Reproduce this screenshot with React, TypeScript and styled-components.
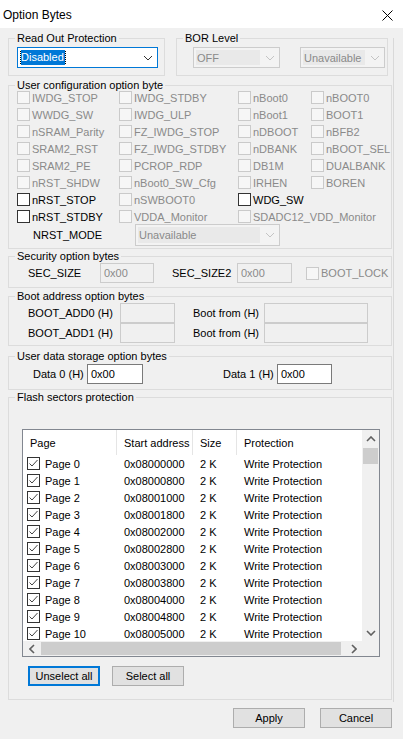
import React from 'react'
import styled, { createGlobalStyle } from 'styled-components'

const GlobalStyle = createGlobalStyle`
    * { box-sizing: border-box; }
    html, body { margin: 0; padding: 0; background: #f0f0f0; }
    body {
        font-family: "Liberation Sans", Arial, sans-serif;
        font-size: 11px;
        color: #000;
    }
`

const Window = styled.div`
    width: 403px;
    height: 739px;
    background: #f0f0f0;
    overflow: hidden;
`

const TitleBar = styled.div`
    height: 28px;
    background: #fff;
    display: flex;
    align-items: center;
    justify-content: space-between;
    padding: 2px 10px 0 3px;
    font-size: 12px;
`

const Panel = styled.div`
    width: 394px;
    padding: 0 1px 2px 8px;
    border-right: 1px solid #d9d9d9;
`

const TopRow = styled.div`
    display: flex;
    gap: 11px;
    margin-top: 10px;
`

const Group = styled.section<{ $width?: number; $gap?: number; $pb?: number; $pr?: number }>`
    width: ${(p) => (p.$width ? `${p.$width}px` : '100%')};
    margin-top: ${(p) => p.$gap ?? 0}px;
    padding: 0 ${(p) => p.$pr ?? 8}px ${(p) => p.$pb ?? 7}px 8px;
    border: 1px solid #dcdcdc;
`

const Caption = styled.div`
    width: fit-content;
    height: 13px;
    line-height: 13px;
    margin: -7px 0 0 -2px;
    padding: 0 2px;
    background: #f0f0f0;
    white-space: nowrap;
`

/* ---------- combo boxes ---------- */

const Combo = styled.div<{ $w: number; $h?: number; $disabled?: boolean; $focus?: boolean; $mt?: number }>`
    width: ${(p) => p.$w}px;
    height: ${(p) => p.$h ?? 21}px;
    flex: none;
    margin-top: ${(p) => p.$mt ?? 0}px;
    display: flex;
    align-items: stretch;
    border: 1px solid ${(p) => (p.$focus ? '#0078d7' : p.$disabled ? '#cccccc' : '#7a7a7a')};
    background: ${(p) => (p.$disabled ? '#f3f3f3' : '#fff')};
`

const ComboText = styled.div<{ $disabled?: boolean }>`
    flex: 1;
    display: flex;
    align-items: center;
    margin: 2px 0 2px 2px;
    padding-left: 1px;
    color: ${(p) => (p.$disabled ? '#8a8a8a' : '#000')};
    background: ${(p) => (p.$disabled ? '#e9e9e9' : 'transparent')};
    white-space: nowrap;
    overflow: hidden;
`

const Selected = styled.span`
    background: #0078d7;
    color: #fff;
    padding: 1px 1px 2px 0;
    outline: 1px dotted #000;
`

const ComboArrow = styled.div`
    width: 19px;
    display: flex;
    align-items: center;
    justify-content: center;
`

type Dir = 'up' | 'down' | 'left' | 'right'

const chevronPoints: Record<Dir, string> = {
    down: '1,1 5,5 9,1',
    up: '1,5 5,1 9,5',
    left: '5,1 1,5 5,9',
    right: '1,1 5,5 1,9',
}

const Chevron = ({ dir, color, weight = 1 }: { dir: Dir; color: string; weight?: number }) => {
    const vertical = dir === 'up' || dir === 'down'
    const w = vertical ? 10 : 6
    const h = vertical ? 6 : 10
    return (
        <svg width={w} height={h} viewBox={`0 0 ${w} ${h}`}>
            <polyline points={chevronPoints[dir]} fill="none" stroke={color} strokeWidth={weight} />
        </svg>
    )
}

const ComboBox = ({
    value,
    width,
    height,
    disabled,
    focus,
    mt,
}: {
    value: string
    width: number
    height?: number
    disabled?: boolean
    focus?: boolean
    mt?: number
}) => (
    <Combo $w={width} $h={height} $disabled={disabled} $focus={focus} $mt={mt}>
        <ComboText $disabled={disabled}>{focus ? <Selected>{value}</Selected> : value}</ComboText>
        <ComboArrow>
            <Chevron dir="down" color={disabled ? '#c4c4c4' : '#333'} />
        </ComboArrow>
    </Combo>
)

/* ---------- check boxes ---------- */

const CheckItem = styled.div<{ $disabled?: boolean }>`
    display: flex;
    align-items: center;
    gap: 2px;
    white-space: nowrap;
    color: ${(p) => (p.$disabled ? '#8a8a8a' : '#000')};
`

const Box = styled.span<{ $disabled?: boolean; $tone?: string }>`
    width: 13px;
    height: 13px;
    flex: none;
    display: flex;
    align-items: center;
    justify-content: center;
    border: 1px solid ${(p) => (p.$disabled ? '#cacaca' : p.$tone ?? '#333')};
    background: ${(p) => (p.$disabled ? '#f6f6f6' : '#fff')};
`

const Check = ({ label, disabled }: { label: string; disabled?: boolean }) => (
    <CheckItem $disabled={disabled}>
        <Box $disabled={disabled} />
        {label}
    </CheckItem>
)

const UserGrid = styled.div`
    display: grid;
    grid-template-columns: 102px 119px 73px 1fr;
    grid-auto-rows: 17px;
    align-items: center;
    margin-top: -3px;
`

const ModeRow = styled.div`
    display: flex;
    align-items: center;
    margin-top: -1px;
`

const ModeLabel = styled.div`
    width: 118px;
    padding-left: 16px;
`

/* ---------- text fields ---------- */

const FieldRow = styled.div<{ $cols: string; $pl: number; $mt?: number }>`
    display: grid;
    grid-template-columns: ${(p) => p.$cols};
    grid-auto-rows: 20px;
    align-items: center;
    padding-left: ${(p) => p.$pl}px;
    margin-top: ${(p) => p.$mt ?? 0}px;
`

const Input = styled.div<{ $disabled?: boolean }>`
    height: 20px;
    display: flex;
    align-items: center;
    padding-left: 3px;
    border: 1px solid ${(p) => (p.$disabled ? '#cccccc' : '#7a7a7a')};
    background: ${(p) => (p.$disabled ? '#f0f0f0' : '#fff')};
    color: ${(p) => (p.$disabled ? '#8a8a8a' : '#000')};
`

/* ---------- list view ---------- */

const ListView = styled.div`
    width: 358px;
    margin: 25px 0 0 5px;
    border: 1px solid #828790;
    background: #fff;
    display: grid;
    grid-template-columns: 339px 17px;
    grid-template-rows: 211px 15px;
`

const View = styled.div`
    overflow: hidden;
`

const TableGrid = styled.div`
    display: grid;
    grid-template-columns: 94px 76px 44px 125px;
`

const HeaderCell = styled.div<{ $last?: boolean }>`
    height: 25px;
    display: flex;
    align-items: center;
    padding-left: 7px;
    border-right: ${(p) => (p.$last ? 'none' : '1px solid #e5e5e5')};
    white-space: nowrap;
`

const Cell = styled.div<{ $pl?: number }>`
    height: 17px;
    display: flex;
    align-items: center;
    gap: 5px;
    padding-left: ${(p) => p.$pl ?? 7}px;
    white-space: nowrap;
`

const VBar = styled.div`
    background: #f0f0f0;
    display: flex;
    flex-direction: column;
`

const HBar = styled.div`
    background: #f0f0f0;
    display: flex;
    align-items: center;
`

const Corner = styled.div`
    background: #f0f0f0;
`

const ArrowButton = styled.div<{ $w: number; $h: number }>`
    width: ${(p) => p.$w}px;
    height: ${(p) => p.$h}px;
    flex: none;
    display: flex;
    align-items: center;
    justify-content: center;
`

const Thumb = styled.div<{ $w: number; $h: number }>`
    width: ${(p) => p.$w}px;
    height: ${(p) => p.$h}px;
    margin: 1px;
    background: #cdcdcd;
    flex: none;
`

const Spacer = styled.div`
    flex: 1;
`

/* ---------- buttons ---------- */

const ButtonRow = styled.div<{ $mt?: number; $pl?: number; $pr?: number; $gap: number; $end?: boolean }>`
    display: flex;
    gap: ${(p) => p.$gap}px;
    justify-content: ${(p) => (p.$end ? 'flex-end' : 'flex-start')};
    margin-top: ${(p) => p.$mt ?? 0}px;
    padding-left: ${(p) => p.$pl ?? 0}px;
    padding-right: ${(p) => p.$pr ?? 0}px;
`

const Button = styled.div<{ $default?: boolean }>`
    width: 72px;
    height: 20px;
    flex: none;
    display: flex;
    align-items: center;
    justify-content: center;
    background: #e1e1e1;
    border: 1px solid ${(p) => (p.$default ? '#0078d7' : '#adadad')};
    box-shadow: ${(p) => (p.$default ? 'inset 0 0 0 1px #0078d7' : 'none')};
`

const TickBox = () => (
    <Box $tone="#333">
        <svg width="11" height="11" viewBox="0 0 11 11">
            <polyline points="1.5,5.5 4,8 9.5,2" fill="none" stroke="#444" strokeWidth="1" />
        </svg>
    </Box>
)

type Opt = { label: string; enabled?: boolean } | null

const userRows: Opt[][] = [
    [{ label: 'IWDG_STOP' }, { label: 'IWDG_STDBY' }, { label: 'nBoot0' }, { label: 'nBOOT0' }],
    [{ label: 'WWDG_SW' }, { label: 'IWDG_ULP' }, { label: 'nBoot1' }, { label: 'BOOT1' }],
    [{ label: 'nSRAM_Parity' }, { label: 'FZ_IWDG_STOP' }, { label: 'nDBOOT' }, { label: 'nBFB2' }],
    [{ label: 'SRAM2_RST' }, { label: 'FZ_IWDG_STDBY' }, { label: 'nDBANK' }, { label: 'nBOOT_SEL' }],
    [{ label: 'SRAM2_PE' }, { label: 'PCROP_RDP' }, { label: 'DB1M' }, { label: 'DUALBANK' }],
    [{ label: 'nRST_SHDW' }, { label: 'nBoot0_SW_Cfg' }, { label: 'IRHEN' }, { label: 'BOREN' }],
    [{ label: 'nRST_STOP', enabled: true }, { label: 'nSWBOOT0' }, { label: 'WDG_SW', enabled: true }, null],
    [{ label: 'nRST_STDBY', enabled: true }, { label: 'VDDA_Monitor' }, { label: 'SDADC12_VDD_Monitor' }, null],
]

// only the pages that fit in the visible part of the list
const pages = Array.from({ length: 11 }, (_, i) => ({
    name: `Page ${i}`,
    address: `0x${(0x08000000 + i * 0x800).toString(16).toUpperCase().padStart(8, '0')}`,
}))

const CloseIcon = () => (
    <svg width="11" height="11" viewBox="0 0 11 11">
        <path d="M0.5 0.5 L10.5 10.5 M10.5 0.5 L0.5 10.5" stroke="#000" strokeWidth="1" />
    </svg>
)

const App = () => {
    return (
        <Window>
            <GlobalStyle />
            <TitleBar>
                <span>Option Bytes</span>
                <CloseIcon />
            </TitleBar>
            <Panel>
                <TopRow>
                    <Group $width={157}>
                        <Caption>Read Out Protection</Caption>
                        <ComboBox value="Disabled" width={141} focus mt={2} />
                    </Group>
                    <Group $width={212} $pr={2}>
                        <Caption>BOR Level</Caption>
                        <ButtonRow $gap={20} $pl={8} $mt={2}>
                            <ComboBox value="OFF" width={87} disabled />
                            <ComboBox value="Unavailable" width={85} disabled />
                        </ButtonRow>
                    </Group>
                </TopRow>

                <Group $gap={9} $pb={2}>
                    <Caption>User configuration option byte</Caption>
                    <UserGrid>
                        {userRows.flatMap((row, r) =>
                            row.map((opt, c) =>
                                opt ? <Check key={`${r}-${c}`} label={opt.label} disabled={!opt.enabled} /> : <span key={`${r}-${c}`} />
                            )
                        )}
                    </UserGrid>
                    <ModeRow>
                        <ModeLabel>NRST_MODE</ModeLabel>
                        <ComboBox value="Unavailable" width={145} height={22} disabled />
                    </ModeRow>
                </Group>

                <Group $gap={7} $pb={4}>
                    <Caption>Security option bytes</Caption>
                    <FieldRow $cols="72px 54px 18px 65px 55px 14px auto" $pl={11}>
                        <span>SEC_SIZE</span>
                        <Input $disabled>0x00</Input>
                        <span />
                        <span>SEC_SIZE2</span>
                        <Input $disabled>0x00</Input>
                        <span />
                        <Check label="BOOT_LOCK" disabled />
                    </FieldRow>
                </Group>

                <Group $gap={8} $pb={2}>
                    <Caption>Boot address option bytes</Caption>
                    <FieldRow $cols="92px 55px 18px 71px 104px" $pl={11}>
                        <span>BOOT_ADD0 (H)</span>
                        <Input $disabled />
                        <span />
                        <span>Boot from (H)</span>
                        <Input $disabled />
                        <span>BOOT_ADD1 (H)</span>
                        <Input $disabled />
                        <span />
                        <span>Boot from (H)</span>
                        <Input $disabled />
                    </FieldRow>
                </Group>

                <Group $gap={10} $pb={5}>
                    <Caption>User data storage option bytes</Caption>
                    <FieldRow $cols="54px 56px 80px 54px 55px" $pl={16} $mt={1}>
                        <span>Data 0 (H)</span>
                        <Input>0x00</Input>
                        <span />
                        <span>Data 1 (H)</span>
                        <Input>0x00</Input>
                    </FieldRow>
                </Group>

                <Group $gap={7} $pb={13}>
                    <Caption>Flash sectors protection</Caption>
                    <ListView>
                        <View>
                            <TableGrid>
                                <HeaderCell>Page</HeaderCell>
                                <HeaderCell>Start address</HeaderCell>
                                <HeaderCell>Size</HeaderCell>
                                <HeaderCell $last>Protection</HeaderCell>
                                {pages.map((p) => (
                                    <React.Fragment key={p.name}>
                                        <Cell $pl={4}>
                                            <TickBox />
                                            {p.name}
                                        </Cell>
                                        <Cell>{p.address}</Cell>
                                        <Cell>2 K</Cell>
                                        <Cell>Write Protection</Cell>
                                    </React.Fragment>
                                ))}
                            </TableGrid>
                        </View>
                        <VBar>
                            <ArrowButton $w={17} $h={17}>
                                <Chevron dir="up" color="#606060" weight={1.6} />
                            </ArrowButton>
                            <Thumb $w={15} $h={16} />
                            <Spacer />
                            <ArrowButton $w={17} $h={17}>
                                <Chevron dir="down" color="#606060" weight={1.6} />
                            </ArrowButton>
                        </VBar>
                        <HBar>
                            <ArrowButton $w={17} $h={15}>
                                <Chevron dir="left" color="#606060" weight={1.6} />
                            </ArrowButton>
                            <Thumb $w={300} $h={13} />
                            <Spacer />
                            <ArrowButton $w={17} $h={15}>
                                <Chevron dir="right" color="#606060" weight={1.6} />
                            </ArrowButton>
                        </HBar>
                        <Corner />
                    </ListView>
                    <ButtonRow $gap={12} $pl={11} $mt={9}>
                        <Button $default>Unselect all</Button>
                        <Button>Select all</Button>
                    </ButtonRow>
                </Group>
            </Panel>
            <ButtonRow $gap={15} $pr={11} $mt={6} $end>
                <Button>Apply</Button>
                <Button>Cancel</Button>
            </ButtonRow>
        </Window>
    )
}

export default App
